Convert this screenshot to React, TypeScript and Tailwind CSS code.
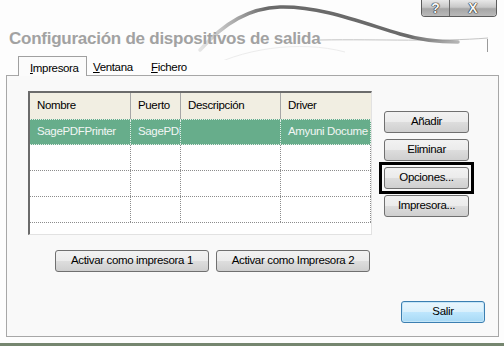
import React from 'react'

const rows = [
  { nombre: 'SagePDFPrinter', puerto: 'SagePDF', desc: '', driver: 'Amyuni Docume', selected: true },
  { nombre: '', puerto: '', desc: '', driver: '', selected: false },
  { nombre: '', puerto: '', desc: '', driver: '', selected: false },
  { nombre: '', puerto: '', desc: '', driver: '', selected: false }
]

const cols = ['w-[101px]', 'w-[50px]', 'w-[100px]', 'w-[90px]']

function WinButton({
  label,
  className = '',
  isDefault = false,
  focused = false
}: {
  label: string
  className?: string
  isDefault?: boolean
  focused?: boolean
}) {
  const base = [
    'relative h-[22px] rounded-[3px] border text-[11.5px] tracking-[-0.35px] text-black leading-none',
    'flex items-center justify-center'
  ].join(' ')
  const skin = isDefault
    ? 'border-[#3c7fb1] bg-[linear-gradient(#eaf6fd_0%,#d9f0fc_50%,#bee6fd_51%,#a7d9f5_100%)] shadow-[inset_0_0_0_1px_#c5e6f8]'
    : 'border-[#707070] bg-[linear-gradient(#f2f2f2_0%,#ebebeb_50%,#dddddd_51%,#cfcfcf_100%)]'
  return (
    <div className={`${base} ${skin} ${className}`}>
      {label}
      {focused && <div className="absolute -inset-[6px] border-[3px] border-black pointer-events-none" />}
    </div>
  )
}

function Swoosh() {
  return (
    <svg className="absolute left-0 top-0 pointer-events-none" width="504" height="60" viewBox="0 0 504 60">
      <defs>
        <linearGradient id="sw" x1="200" y1="0" x2="460" y2="0" gradientUnits="userSpaceOnUse">
          <stop offset="0" stopColor="#8a8a8a" stopOpacity="0.2" />
          <stop offset="0.25" stopColor="#6a6a6a" />
          <stop offset="0.8" stopColor="#6a6a6a" />
          <stop offset="1" stopColor="#8a8a8a" stopOpacity="0.6" />
        </linearGradient>
      </defs>
      <path d="M 200 72 C 240 48, 300 40, 345 52" fill="none" stroke="#ececec" strokeWidth="1" />
      <path d="M 320 40 C 380 39, 440 42, 488 38" fill="none" stroke="#c4c4c4" strokeWidth="1" />
      <path d="M 200 50 C 225 22, 250 8, 280 7 C 320 6, 360 22, 400 34 C 420 40, 440 42, 458 42" fill="none" stroke="url(#sw)" strokeWidth="3.5" strokeLinecap="round" />
      <line x1="487.5" y1="39" x2="487.5" y2="52" stroke="#9a9a9a" strokeWidth="1" />
    </svg>
  )
}

export default function App() {
  const ui = "font-['Liberation_Sans',Arial,sans-serif]"
  const capBtn = [
    'flex items-center justify-center',
    'bg-[linear-gradient(#e8e8e8,#c8c8c8_45%,#a6a6a6_55%,#bababa)]',
    'text-[14px] font-bold text-[#f6f6f6]',
    '[text-shadow:0_0_1px_#1a1a1a,0_0_1px_#1a1a1a,0_0_1px_#1a1a1a]'
  ].join(' ')

  return (
    <div className={`w-[504px] h-[346px] bg-[#fdfdfd] flex flex-col overflow-hidden ${ui}`}>
      {/* caption + title */}
      <div className="relative h-[56px] shrink-0">
        <Swoosh />
        <div className="relative flex justify-end pr-[7px]">
          <div className="flex h-[17px] rounded-b-[4px] border border-t-0 border-[#5c5c5c] overflow-hidden">
            <div className={`w-[28px] border-r border-[#6a6a6a] ${capBtn}`}>?</div>
            <div className={`w-[46px] ${capBtn}`}>X</div>
          </div>
        </div>
        <div className="relative pl-[9px] mt-[13px] text-[17px] font-bold tracking-[-0.25px] leading-none text-[#a2a2a2]">
          Configuración de dispositivos de salida
        </div>
      </div>

      {/* tabs */}
      <div className="flex h-[19px] pl-[18px] text-[11.5px] tracking-[-0.35px] text-black shrink-0">
        <div className="relative z-10 w-[69px] h-[20px] pl-[11px] pt-[3px] border border-b-0 border-[#a0a0a0] bg-[#fbfbfb]">
          <span className="underline underline-offset-1">I</span>mpresora
        </div>
        <div className="pl-[6px] pt-[3px] w-[64px]">
          <span className="underline underline-offset-1">V</span>entana
        </div>
        <div className="pt-[3px]">
          <span className="underline underline-offset-1">F</span>ichero
        </div>
      </div>

      {/* panel */}
      <div className="ml-[6px] w-[493px] h-[262px] border border-[#a7a7a7] bg-[#f9f9f9] pt-[15px] pl-[21px] flex flex-col shrink-0">
        <div className="flex">
          <div className="w-[344px] h-[144px] bg-white border-t-2 border-l-2 border-[#6b6b6b] border-r border-b border-r-[#e2e2e2] border-b-[#e2e2e2] text-[11.5px] tracking-[-0.35px]">
            <div className="flex h-[26px] bg-[#f1eee2] text-black">
              {['Nombre', 'Puerto', 'Descripción', 'Driver'].map((h, i) => (
                <div key={h} className={`${cols[i]} pl-[7px] flex items-center ${i < 3 ? 'border-r border-[#a6a6a6]' : ''}`}>
                  {h}
                </div>
              ))}
            </div>
            {rows.map((r, ri) => (
              <div
                key={ri}
                className={`flex h-[26px] border-b border-dotted ${r.selected ? 'bg-[#67ad8b] text-[#f2f6f4] border-[#e4eee8] border-t' : 'border-[#8c8c8c]'}`}
              >
                {[r.nombre, r.puerto, r.desc, r.driver].map((c, i) => (
                  <div
                    key={i}
                    className={`${cols[i]} pl-[7px] flex items-center overflow-hidden whitespace-nowrap border-r border-dotted ${r.selected ? 'border-[#e4eee8]' : 'border-[#8c8c8c]'}`}
                  >
                    {c}
                  </div>
                ))}
              </div>
            ))}
          </div>

          <div className="ml-[12px] mt-[20px] flex flex-col gap-[6px]">
            <WinButton label="Añadir" className="w-[85px]" />
            <WinButton label="Eliminar" className="w-[85px]" />
            <WinButton label="Opciones..." className="w-[85px]" focused />
            <WinButton label="Impresora..." className="w-[85px]" />
          </div>
        </div>

        <div className="flex gap-[7px] ml-[27px] mt-[15px]">
          <WinButton label="Activar como impresora 1" className="w-[154px]" />
          <WinButton label="Activar como Impresora 2" className="w-[154px]" />
        </div>

        <div className="flex justify-end pr-[13px] mt-[29px]">
          <WinButton label="Salir" className="w-[84px]" isDefault />
        </div>
      </div>

      <div className="mt-[6px] h-[3px] bg-[#75866f] shrink-0" />
    </div>
  )
}
